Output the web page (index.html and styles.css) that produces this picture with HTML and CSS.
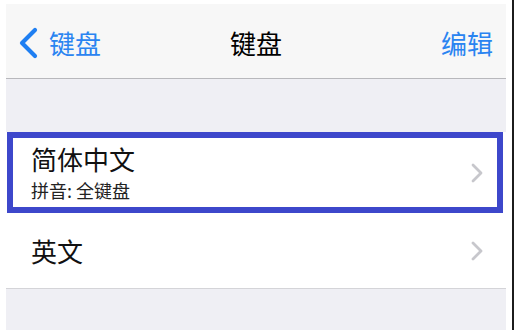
FILE: index.html
```html
<!DOCTYPE html>
<html>
<head>
  <meta charset="utf-8">
  <title>键盘</title>
  <link rel="stylesheet" href="styles.css">
</head>
<body>
  <div class="phone">
    <div class="navbar">
      <a class="nav-back">
        <svg width="22" height="32" viewBox="0 0 22 32"><polyline points="18,3 5,16 18,29" fill="none" stroke="#1f7ff2" stroke-width="4.2" stroke-linecap="round" stroke-linejoin="round"/></svg>
        <span>键盘</span>
      </a>
      <div class="nav-title">键盘</div>
      <a class="nav-edit">编辑</a>
    </div>

    <div class="gap"></div>

    <div class="list">
      <div class="row row-selected">
        <div class="row-text">
          <div class="row-title">简体中文</div>
          <div class="row-sub">拼音: 全键盘</div>
        </div>
        <svg class="chevron" width="14" height="22" viewBox="0 0 14 22"><polyline points="3,3 11,11 3,19" fill="none" stroke="#c7c7cc" stroke-width="2.8" stroke-linecap="round" stroke-linejoin="round"/></svg>
      </div>
      <div class="row row-last">
        <div class="row-text">
          <div class="row-title">英文</div>
        </div>
        <svg class="chevron" width="14" height="22" viewBox="0 0 14 22"><polyline points="3,3 11,11 3,19" fill="none" stroke="#c7c7cc" stroke-width="2.8" stroke-linecap="round" stroke-linejoin="round"/></svg>
      </div>
    </div>

    <div class="gap-bottom"></div>
  </div>
</body>
</html>
```

FILE: styles.css
```css
html {
  background-color: #fff;
  overflow: hidden;
}
body {
  margin: 0;
  width: 514px;
  height: 330px;
  padding: 4px 0 0 6px;
  box-sizing: border-box;
  border-right: 2px solid #1c1c1c;
  overflow: hidden;
  font-family: "Noto Sans CJK SC", "Noto Sans", sans-serif;
}
.phone {
  width: 500px;
  background-color: #efeff4;
}
.navbar {
  height: 75px;
  padding-top: 4px;
  box-sizing: border-box;
  background-color: #f7f7f7;
  border-bottom: 1px solid #b8b8bc;
  display: grid;
  grid-template-columns: 1fr auto 1fr;
  align-items: center;
  font-size: 26px;
}
.nav-back {
  display: flex;
  align-items: center;
  gap: 10px;
  padding-left: 11px;
  color: #2a84f1;
  line-height: 32px;
}
.nav-title {
  color: #000;
  line-height: 32px;
}
.nav-edit {
  justify-self: end;
  color: #2a84f1;
  line-height: 32px;
  padding-right: 13px;
}
.gap {
  height: 53px;
}
.list {
  background-color: #fff;
}
.row {
  display: flex;
  align-items: center;
  justify-content: space-between;
  padding: 0 22px 0 25px;
  position: relative;
}
.row-selected {
  height: 81px;
}
.row-selected .row-text {
  padding-bottom: 1px;
}
.row-selected::after {
  content: "";
  position: absolute;
  left: 1px;
  right: 3px;
  top: 0;
  bottom: 0;
  border: 6px solid #3d47cb;
}
.row-last {
  height: 76px;
  box-sizing: border-box;
  border-bottom: 1px solid #d4d4d8;
}
.row-title {
  font-size: 26px;
  line-height: 30px;
  color: #111;
}
.row-sub {
  font-size: 18px;
  line-height: 22px;
  margin-top: 5px;
  color: #222;
}
.chevron {
  display: block;
}
.gap-bottom {
  height: 41px;
}
```
